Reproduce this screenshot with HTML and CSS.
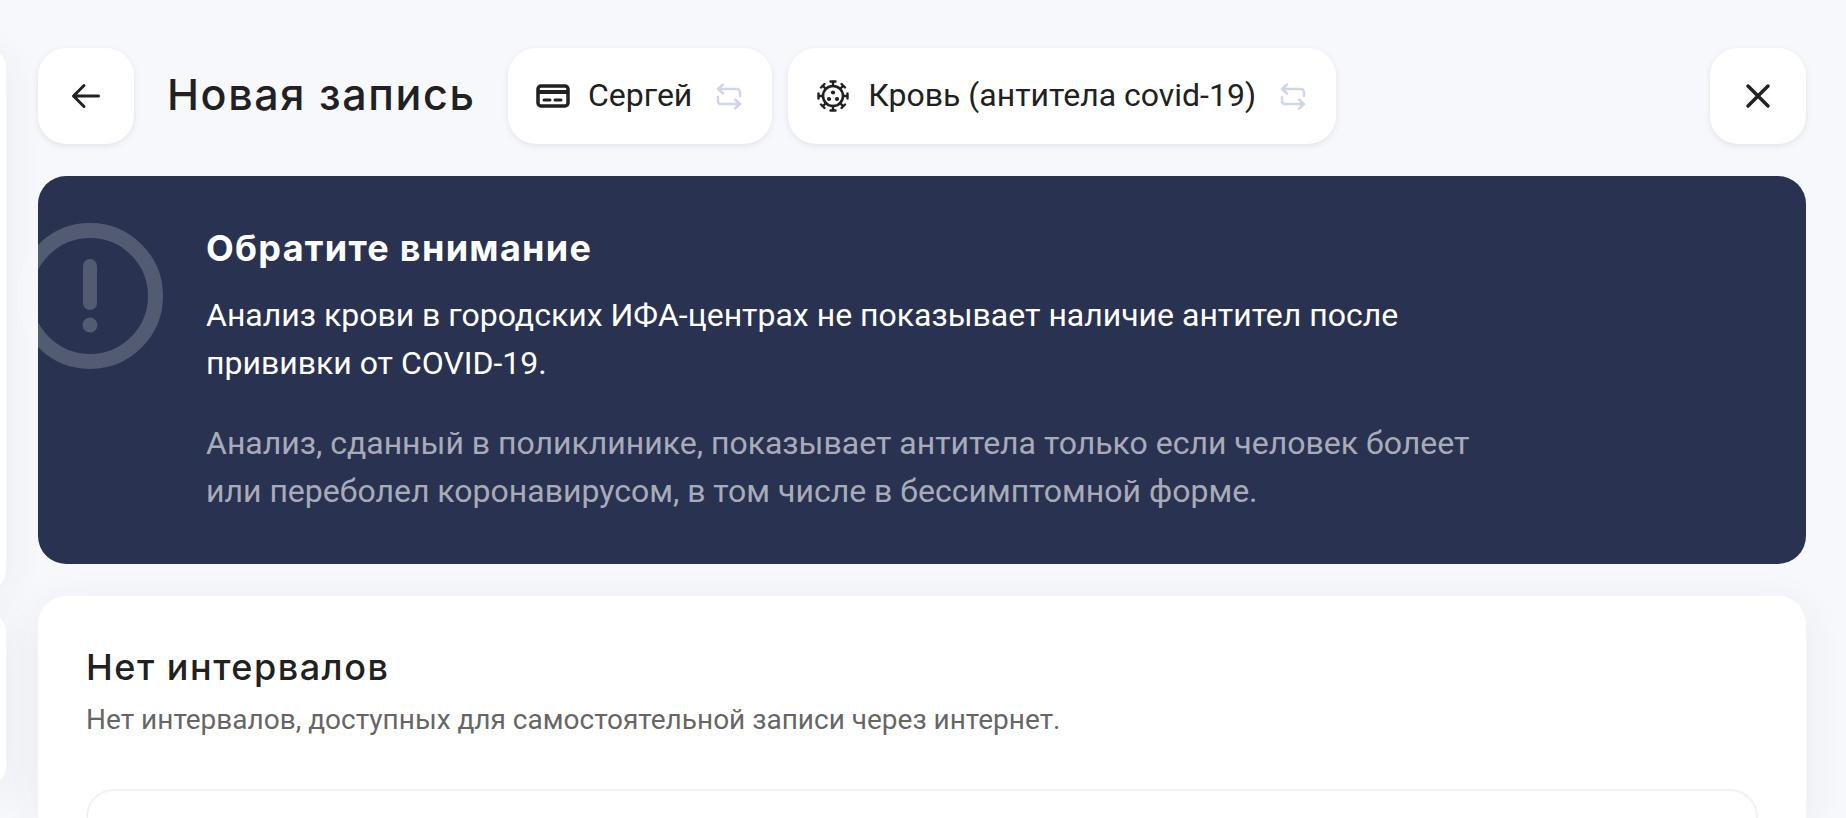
FILE: index.html
```html
<!DOCTYPE html>
<html lang="ru">
<head>
  <meta charset="UTF-8">
  <title>Новая запись</title>
  <link rel="stylesheet" href="styles.css">
</head>
<body>
  <div class="sidebar">
    <div class="side-card side-card-top"></div>
    <div class="side-card side-card-bottom"></div>
  </div>

  <main class="main">
    <header class="topbar">
      <button class="square-btn back-btn" aria-label="Назад">
        <svg width="32" height="32" viewBox="0 0 32 32" fill="none" stroke="#212121" stroke-width="3" stroke-linecap="round" stroke-linejoin="round"><path d="M3.500 16h25M14 5.500 3.500 16 14 26.500"/></svg>
      </button>
      <h1 class="page-title">Новая запись</h1>
      <div class="chip">
        <svg class="chip-icon" width="36" height="36" viewBox="0 0 36 36" fill="none"><rect x="3" y="8" width="30" height="20" rx="3" stroke="#212121" stroke-width="3.500"/><path d="M3 14h30" stroke="#212121" stroke-width="4"/><path d="M9 22h6M20 22h6" stroke="#212121" stroke-width="3" stroke-linecap="round"/></svg>
        <span>Сергей</span>
        <svg class="swap-icon" width="26" height="27" viewBox="0 0 26 27" fill="none" stroke="#cfd5ea" stroke-width="2.500" stroke-linecap="round" stroke-linejoin="round"><path d="M7 1.500 2 6l5 4.500M2 6h19a3 3 0 0 1 3 3v4"/><path d="M19 25.500l5-4.500-5-4.500M24 21H5a3 3 0 0 1-3-3v-4"/></svg>
      </div>
      <div class="chip">
        <svg class="chip-icon" width="36" height="36" viewBox="0 0 36 36" fill="none" stroke="#212121" stroke-linecap="round">
          <circle cx="18" cy="18" r="10" stroke-width="2.600"/>
          <path d="M18 8V4M18 28v4M8 18H4M28 18h4M10.900 10.900 8 8M25.100 25.100 28 28M25.100 10.900 28 8M10.900 25.100 8 28" stroke-width="2.400"/>
          <path d="M15.500 3.500h5M15.500 32.500h5M3.500 15.500v5M32.500 15.500v5M6 9.500 9.500 6M26.500 30 30 26.500M26.500 6 30 9.500M6 26.500 9.500 30" stroke-width="2.400"/>
          <circle cx="18" cy="14.500" r="2.100" fill="#212121" stroke="none"/>
          <circle cx="14" cy="21" r="2.100" fill="#212121" stroke="none"/>
          <circle cx="22" cy="21" r="2.100" fill="#212121" stroke="none"/>
        </svg>
        <span>Кровь (антитела covid-19)</span>
        <svg class="swap-icon" width="26" height="27" viewBox="0 0 26 27" fill="none" stroke="#cfd5ea" stroke-width="2.500" stroke-linecap="round" stroke-linejoin="round"><path d="M7 1.500 2 6l5 4.500M2 6h19a3 3 0 0 1 3 3v4"/><path d="M19 25.500l5-4.500-5-4.500M24 21H5a3 3 0 0 1-3-3v-4"/></svg>
      </div>
      <button class="square-btn close-btn" aria-label="Закрыть">
        <svg width="32" height="32" viewBox="0 0 32 32" fill="none" stroke="#212121" stroke-width="3.500" stroke-linecap="round"><path d="M6 6l20 20M26 6 6 26"/></svg>
      </button>
    </header>

    <section class="notice">
      <svg class="notice-icon" width="146" height="146" viewBox="0 0 146 146" fill="none">
        <circle cx="73" cy="73" r="65.500" stroke="#fff" stroke-opacity=".2" stroke-width="15"/>
        <path d="M73 43v37" stroke="#fff" stroke-opacity=".2" stroke-width="14" stroke-linecap="round"/>
        <circle cx="73" cy="102" r="7.500" fill="#fff" fill-opacity=".2"/>
      </svg>
      <h2 class="notice-title">Обратите внимание</h2>
      <p class="notice-text">Анализ крови в городских ИФА-центрах не показывает наличие антител после прививки от COVID-19.</p>
      <p class="notice-text notice-muted">Анализ, сданный в поликлинике, показывает антитела только если человек болеет или переболел коронавирусом, в том числе в бессимптомной форме.</p>
    </section>

    <section class="card">
      <h2 class="card-title">Нет интервалов</h2>
      <p class="card-text">Нет интервалов, доступных для самостоятельной записи через интернет.</p>
      <div class="inner-box"></div>
    </section>
  </main>
</body>
</html>
```

FILE: styles.css
```css
html {
  height: 818px;
  overflow: hidden;
}

body {
  margin: 0;
  display: flex;
  height: 818px;
  overflow: hidden;
  background: #f7f8fc;
  color: #212121;
  font-family: 'Roboto', sans-serif;
}

/* Left column, only its edge is visible */
.sidebar {
  width: 6px;
  height: 818px;
  flex: none;
  display: flex;
  flex-direction: column;
  gap: 22px;
  box-sizing: border-box;
  padding-top: 48px;
}

.side-card {
  margin-left: -34px;
  background: #fff;
  border-radius: 28px;
  box-shadow: 0 8px 40px rgba(40, 50, 90, 0.07);
}

.side-card-top {
  height: 542px;
}

.side-card-bottom {
  height: 174px;
}

.main {
  flex: 1;
  min-width: 0;
  box-sizing: border-box;
  height: 818px;
  padding: 48px 40px 0 32px;
  display: flex;
  flex-direction: column;
}

/* Top bar */
.topbar {
  display: flex;
  align-items: center;
  height: 96px;
  flex: none;
}

.square-btn {
  width: 96px;
  height: 96px;
  padding: 0;
  border: none;
  border-radius: 28px;
  background: #fff;
  box-shadow: 0 2px 6px rgba(40, 50, 90, 0.1);
  display: flex;
  align-items: center;
  justify-content: center;
  flex: none;
}

.close-btn {
  margin-left: auto;
}

.page-title {
  width: 341px;
  margin: 0 0 4px 33px;
  font-family: 'Inter', sans-serif;
  font-weight: 500;
  font-size: 43px;
  letter-spacing: 1.6px;
  white-space: nowrap;
}

.chip {
  height: 96px;
  padding: 0 30px 0 27px;
  margin-right: 16px;
  border-radius: 28px;
  background: #fff;
  box-shadow: 0 2px 6px rgba(40, 50, 90, 0.1);
  display: flex;
  align-items: center;
  font-size: 32px;
  white-space: nowrap;
}

.chip span {
  padding-bottom: 2px;
}

.chip-icon {
  margin-right: 17px;
}

.swap-icon {
  margin-left: 24px;
}

/* Dark notice */
.notice {
  position: relative;
  flex: none;
  height: 388px;
  box-sizing: border-box;
  margin-top: 32px;
  padding: 48px 40px 0 168px;
  border-radius: 28px;
  background: #293251;
  color: #fff;
}

.notice-icon {
  position: absolute;
  left: -21px;
  top: 47px;
}

.notice-title {
  margin: 0 0 19px;
  font-family: 'Inter', sans-serif;
  font-weight: 700;
  font-size: 36px;
  line-height: 48px;
  letter-spacing: 1.3px;
}

.notice-text {
  margin: 0 0 32px;
  max-width: 1280px;
  font-size: 32px;
  line-height: 48px;
}

.notice-muted {
  color: rgba(255, 255, 255, 0.6);
}

/* White card, runs past the bottom of the window */
.card {
  flex: 1;
  min-height: 0;
  overflow: hidden;
  margin-top: 32px;
  padding: 49px 48px 0;
  border-radius: 28px 28px 0 0;
  background: #fff;
  box-shadow: 0 8px 40px rgba(40, 50, 90, 0.07);
}

.card-title {
  margin: 0 0 13px;
  font-family: 'Inter', sans-serif;
  font-weight: 500;
  font-size: 36px;
  line-height: 44px;
  letter-spacing: 1.5px;
}

.card-text {
  margin: 0;
  font-size: 28px;
  line-height: 36px;
  color: #666;
}

.inner-box {
  margin-top: 51px;
  height: 200px;
  border: 2px solid #f0f1f7;
  border-radius: 28px;
}
```
